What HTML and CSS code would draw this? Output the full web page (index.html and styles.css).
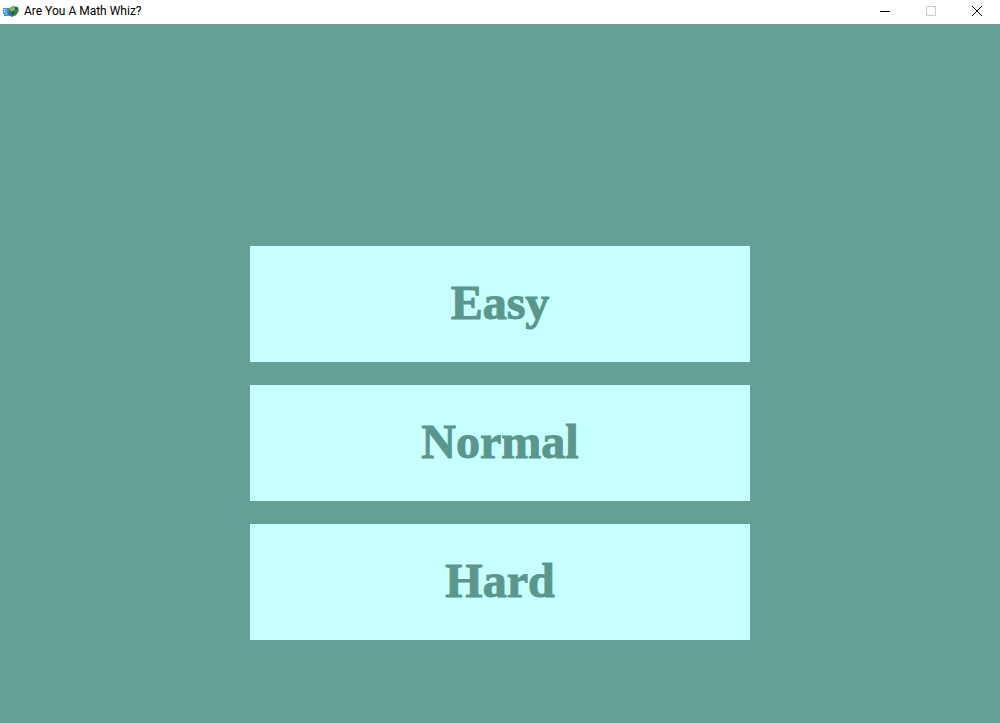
FILE: index.html
```html
<!DOCTYPE html>
<html lang="en">
<head>
<meta charset="utf-8">
<title>Are You A Math Whiz?</title>
<link rel="stylesheet" href="styles.css">
</head>
<body>
<header class="titlebar">
  <svg class="app-icon" viewBox="0 0 16 16" aria-hidden="true">
    <path fill="#4a9fd8" d="M0 5h6v8H1v-2H0z"/>
    <path fill="#c4e6f7" d="M1 6h1v1H1zM1 8h2v1H1zM3 10h1v1H3zM3 6h1v1H3z"/>
    <path fill="#2f7fc4" d="M4 5l4 1v7l-3-1z"/>
    <path fill="#4f9c48" d="M5 6l5-3 5 1 1 4-3 4-4 2-3-3z"/>
    <path fill="#83bd62" d="M6 6l4-2 3 1-4 3z"/>
    <path fill="#2b6ea0" d="M6 7l3 2v5l-3-2z"/>
    <path fill="#23505c" d="M12 4l3 1-1 2-2-1zM9 9l2-1v3l-2 2z"/>
    <path fill="#2f7d45" d="M11 8l3-1 1 1-2 4-2 1z"/>
  </svg>
  <h1 class="title">Are You A Math Whiz?</h1>
  <div class="window-controls">
    <button class="control" type="button" aria-label="Minimize"><svg class="glyph" viewBox="0 0 10 10"><path d="M0 5.5h10"/></svg></button>
    <button class="control" type="button" aria-label="Maximize" disabled><svg class="glyph" viewBox="0 0 10 10"><path d="M.5.5h9v9h-9z"/></svg></button>
    <button class="control" type="button" aria-label="Close"><svg class="glyph" viewBox="0 0 10 10"><path d="M0 0l10 10M10 0L0 10"/></svg></button>
  </div>
</header>
<main class="menu">
  <button class="level" type="button">Easy</button>
  <button class="level" type="button">Normal</button>
  <button class="level" type="button">Hard</button>
</main>
</body>
</html>
```
FILE: styles.css
```css
* {
  box-sizing: border-box;
}

body {
  display: flex;
  flex-direction: column;
  min-height: 100vh;
  margin: 0;
  background: #64a096;
}

.titlebar {
  display: flex;
  align-items: center;
  height: 24px;
  padding: 0 0 2px 3px;
  background: #fff;
}

.app-icon {
  width: 16px;
  height: 16px;
}

.title {
  margin: 0 0 0 5px;
  color: #000;
  font: 400 12px/16px Roboto, "Open Sans", sans-serif;
}

.window-controls {
  display: flex;
  margin-left: auto;
}

.control {
  display: grid;
  place-items: center;
  width: 46px;
  height: 22px;
  padding: 0;
  border: 0;
  background: none;
  color: #000;
}

.control:disabled {
  color: #ccc;
}

.glyph {
  width: 10px;
  height: 10px;
  fill: none;
  stroke: currentColor;
  overflow: visible;
}

.menu {
  flex: 1;
  display: flex;
  flex-direction: column;
  align-items: center;
  gap: 23px;
  padding: 222px 0 83px;
}

.level {
  width: 50%;
  padding: 29px 0 31px;
  border: 0;
  background: #c8ffff;
  color: #5a968c;
  font: 700 48px/56px "Liberation Serif", serif;
  -webkit-text-stroke: 1px #5a968c;
}
```
